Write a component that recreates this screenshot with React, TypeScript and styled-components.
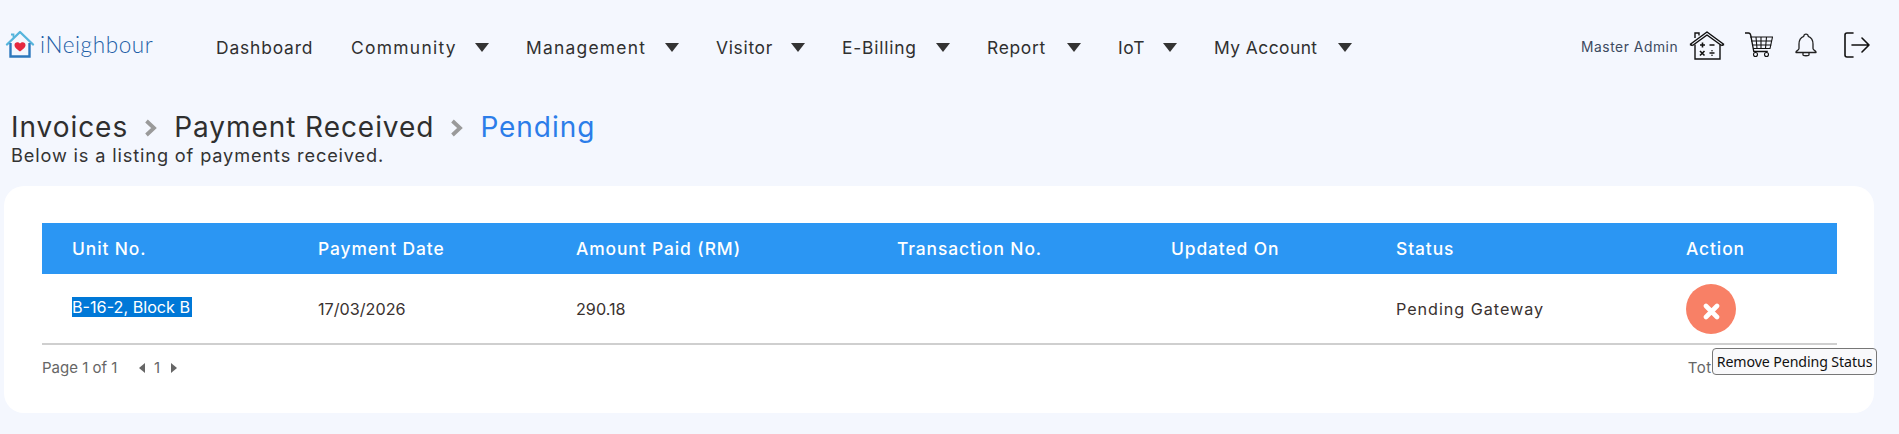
import React from "react";
import styled, { createGlobalStyle } from "styled-components";

const Global = createGlobalStyle`
  html, body { margin: 0; padding: 0; background: #f4f7fe; }
  body { font-family: Inter, "Open Sans", "Liberation Sans", sans-serif; color: #2f2f2f; }
  * { box-sizing: border-box; }
`;

const Page = styled.div`
  width: 1899px;
  height: 434px;
  overflow: hidden;
  display: flex;
  flex-direction: column;
`;

const TopBar = styled.header`
  display: flex;
  align-items: center;
  height: 94px;
  padding: 0 29px 0 5px;
`;

const Logo = styled.div`
  display: flex;
  align-items: center;
  gap: 4px;
  width: 211px;
  margin-top: -6px;
`;

const LogoText = styled.span`
  font-family: Lato, sans-serif;
  font-weight: 300;
  font-size: 22.5px;
  letter-spacing: 0.6px;
  color: #1c5ea6;
`;

const Nav = styled.nav`
  display: flex;
  align-items: center;
  gap: 37px;
  flex: 1;
`;

const NavItem = styled.div`
  display: flex;
  align-items: center;
  gap: 18px;
`;

const NavLabel = styled.span<{ $w: number; $ls: number }>`
  display: block;
  width: ${(p) => p.$w}px;
  font-size: 17.4px;
  letter-spacing: ${(p) => p.$ls}px;
  white-space: nowrap;
  color: #303030;
`;

const Caret = styled.span`
  width: 0;
  height: 0;
  border-left: 7.5px solid transparent;
  border-right: 7.5px solid transparent;
  border-top: 9px solid #333;
`;

const UserArea = styled.div`
  display: flex;
  align-items: center;
`;

const UserName = styled.span`
  font-size: 13.8px;
  letter-spacing: 0.55px;
  color: #3c4a60;
  width: 108px;
  white-space: nowrap;
`;

const IconSlot = styled.span<{ $w: number }>`
  display: flex;
  width: ${(p) => p.$w}px;
  margin-top: -4px;
`;

const Titles = styled.section`
  padding: 17px 11px 0;
  height: 92px;
`;

const Crumbs = styled.div`
  display: flex;
  align-items: center;
  height: 31px;
  gap: 16px;
`;

const Crumb = styled.span<{ $active?: boolean }>`
  font-size: 28px;
  letter-spacing: 0.95px;
  white-space: nowrap;
  color: ${(p) => (p.$active ? "#2b7de9" : "#2f2f2f")};
`;

const Chevron = styled.svg`
  width: 14px;
  height: 18px;
  margin-top: 3px;
`;

const Sub = styled.p`
  margin: 2px 0 0;
  font-size: 18.2px;
  letter-spacing: 0.85px;
  line-height: 22px;
  color: #333;
`;

const Card = styled.main`
  position: relative;
  margin-left: 4px;
  width: 1870px;
  height: 227px;
  background: #fff;
  border-radius: 20px;
  padding: 37px 37px 0 38px;
`;

const cols = "246px 258px 321px 274px 225px 290px 1fr";

const HeadRow = styled.div`
  display: grid;
  grid-template-columns: ${cols};
  align-items: center;
  height: 51px;
  background: #2b96f3;
  padding-left: 30px;
`;

const HeadCell = styled.span`
  color: #fff;
  font-size: 17.4px;
  font-weight: 500;
  letter-spacing: 0.9px;
  white-space: nowrap;
`;

const BodyRow = styled.div`
  display: grid;
  grid-template-columns: ${cols};
  align-items: center;
  height: 71px;
  padding-left: 30px;
  border-bottom: 2px solid #cfcfcf;
`;

const BodyCell = styled.span<{ $spacing?: number }>`
  font-size: 16.2px;
  letter-spacing: ${(p) => p.$spacing ?? 0}px;
  color: #3a3230;
  white-space: nowrap;
`;

const Selected = styled.span`
  display: inline-block;
  width: 120px;
  height: 20px;
  line-height: 20px;
  background: #0078d7;
  color: #fff;
  white-space: nowrap;
  overflow: hidden;
`;

const RemoveButton = styled.button`
  display: flex;
  align-items: center;
  justify-content: center;
  width: 50px;
  height: 50px;
  padding: 6px 0 0;
  border: 0;
  border-radius: 50%;
  background: #f88066;
`;

const Footer = styled.div`
  display: flex;
  justify-content: space-between;
  align-items: center;
  height: 45px;
  font-size: 15px;
  color: #666;
  padding-right: 20px;
`;

const Pager = styled.div`
  display: flex;
  align-items: center;
`;

const PageInfo = styled.span`
  width: 97px;
  white-space: nowrap;
`;

const PagerArrow = styled.span<{ $dir: "left" | "right" }>`
  width: 0;
  height: 0;
  border-top: 5px solid transparent;
  border-bottom: 5px solid transparent;
  ${(p) => (p.$dir === "left" ? "border-right: 6px solid #666;" : "border-left: 6px solid #666;")}
`;

const PageNum = styled.span`
  margin: 0 11px 0 9px;
`;

const TotalText = styled.span`
  letter-spacing: 0.6px;
  white-space: nowrap;
`;

const Tip = styled.div`
  position: absolute;
  left: 1708px;
  top: 162px;
  width: 165px;
  height: 27px;
  display: flex;
  align-items: center;
  justify-content: center;
  white-space: nowrap;
  font-family: "Noto Sans", sans-serif;
  font-size: 14.2px;
  letter-spacing: -0.1px;
  color: #111;
  background: #f9f9fb;
  border: 1px solid #777;
  border-radius: 4px;
`;

const nav = [
  { label: "Dashboard", w: 98, ls: 0.85, caret: false },
  { label: "Community", w: 106, ls: 1.3, caret: true },
  { label: "Management", w: 121, ls: 1.25, caret: true },
  { label: "Visitor", w: 57, ls: 0.7, caret: true },
  { label: "E-Billing", w: 76, ls: 0.8, caret: true },
  { label: "Report", w: 62, ls: 0.7, caret: true },
  { label: "IoT", w: 27, ls: 0.7, caret: true },
  { label: "My Account", w: 106, ls: 0.45, caret: true },
];

const LogoMark = () => (
  <svg width="31" height="30" viewBox="0 0 30 30" fill="none">
    <path d="M1.5 15.5 14.5 3 27.5 15.5" stroke="#56b5dc" strokeWidth="2.4" strokeLinecap="round" strokeLinejoin="round" />
    <path d="M5.5 5.5h2.5v3" stroke="#56b5dc" strokeWidth="1.8" />
    <path d="M5 14v13.5h19V14" stroke="#2d78bd" strokeWidth="2.4" />
    <path d="M14.5 22.5c-4-3-5.5-4.6-5.5-6.6 0-3 3.7-3.7 5.5-1.3 1.800-2.400 5.500-1.700 5.500 1.300 0 2-1.500 3.600-5.500 6.600z" fill="#e5283f" />
  </svg>
);

const CalcHouse = () => (
  <svg width="36" height="30" viewBox="0 0 36 30" fill="none" stroke="#111">
    <path d="M1 14.500 18 2l17 12.500M3.500 15.500 18 5l14.500 10.500M1 14.500l2.500 1M35 14.500l-2.500 1" strokeWidth="1.500" strokeLinejoin="round" />
    <path d="M6 8V3h4v2.500M6 14.500V29h25V14.500" strokeWidth="1.400" />
    <path d="M11 15h5M13.500 12.500v5M20.500 15h5M11 21l4.500 4.500M15.500 21 11 25.500M20.500 23h5" strokeWidth="1.600" />
    <circle cx="23" cy="20.800" r=".8" fill="#111" stroke="none" />
    <circle cx="23" cy="25.200" r=".8" fill="#111" stroke="none" />
  </svg>
);

const Cart = () => (
  <svg width="28" height="26" viewBox="0 0 28 26" fill="none" stroke="#111" strokeWidth="1.100">
    <path d="M0 1h3.500c1.500 0 2 1 2.300 2.500l3 16h14" strokeWidth="1.300" />
    <path d="M5 5h22.500l-2.500 11.500H8M6 9h21M7 13h19.500M11 5l1 11.500M16 5v11.500M21.500 5l-1 11.500" />
    <circle cx="10.500" cy="22.500" r="2" />
    <circle cx="21.500" cy="22.500" r="2" />
  </svg>
);

const Bell = () => (
  <svg width="22" height="26" viewBox="0 0 22 26" fill="none" stroke="#222" strokeWidth="1.300" strokeLinejoin="round">
    <path d="M8.800 4.300C9 1.500 13 1.500 13.200 4.300 16.500 5.500 18 8.500 18 12v4.500c0 1.500 3 2.500 3 3.500v.5H1V20c0-1 3-2 3-3.500V12c0-3.500 1.500-6.500 4.800-7.700z" />
    <path d="M8 20.500v2.500c0 1 6 1 6 0v-2.500" />
  </svg>
);

const Exit = () => (
  <svg width="26" height="26" viewBox="0 0 26 26" fill="none" stroke="#111" strokeWidth="1.600" strokeLinecap="round" strokeLinejoin="round">
    <path d="M9 1H3C1.800 1 1 1.800 1 3v20c0 1.200.8 2 2 2h6" />
    <path d="M8 13h17M18 6l7 7-7 7" />
  </svg>
);

const XIcon = () => (
  <svg width="17" height="17" viewBox="0 0 17 17" fill="none" stroke="#fff" strokeWidth="4.600" strokeLinecap="round">
    <path d="M3 3l11 11M14 3 3 14" />
  </svg>
);

const Sep = () => (
  <Chevron viewBox="0 0 14 18" fill="none" stroke="#9a9a9a" strokeWidth="3.800">
    <path d="M2.500 2 10 9l-7.500 7" />
  </Chevron>
);

export default function App() {
  return (
    <Page>
      <Global />
      <TopBar>
        <Logo>
          <LogoMark />
          <LogoText>iNeighbour</LogoText>
        </Logo>
        <Nav>
          {nav.map((n) => (
            <NavItem key={n.label}>
              <NavLabel $w={n.w} $ls={n.ls}>{n.label}</NavLabel>
              {n.caret && <Caret />}
            </NavItem>
          ))}
        </Nav>
        <UserArea>
          <UserName>Master Admin</UserName>
          <IconSlot $w={56}><CalcHouse /></IconSlot>
          <IconSlot $w={50}><Cart /></IconSlot>
          <IconSlot $w={49}><Bell /></IconSlot>
          <IconSlot $w={26}><Exit /></IconSlot>
        </UserArea>
      </TopBar>
      <Titles>
        <Crumbs>
          <Crumb>Invoices</Crumb>
          <Sep />
          <Crumb>Payment Received</Crumb>
          <Sep />
          <Crumb $active>Pending</Crumb>
        </Crumbs>
        <Sub>Below is a listing of payments received.</Sub>
      </Titles>
      <Card>
        <HeadRow>
          {["Unit No.", "Payment Date", "Amount Paid (RM)", "Transaction No.", "Updated On", "Status", "Action"].map((h) => (
            <HeadCell key={h}>{h}</HeadCell>
          ))}
        </HeadRow>
        <BodyRow>
          <BodyCell><Selected>B-16-2, Block B</Selected></BodyCell>
          <BodyCell>17/03/2026</BodyCell>
          <BodyCell>290.18</BodyCell>
          <BodyCell />
          <BodyCell />
          <BodyCell $spacing={0.95}>Pending Gateway</BodyCell>
          <BodyCell>
            <RemoveButton aria-label="Remove Pending Status"><XIcon /></RemoveButton>
          </BodyCell>
        </BodyRow>
        <Footer>
          <Pager>
            <PageInfo>Page 1 of 1</PageInfo>
            <PagerArrow $dir="left" />
            <PageNum>1</PageNum>
            <PagerArrow $dir="right" />
          </Pager>
          <TotalText>Total: 1 record(s)</TotalText>
        </Footer>
        <Tip>Remove Pending Status</Tip>
      </Card>
    </Page>
  );
}
